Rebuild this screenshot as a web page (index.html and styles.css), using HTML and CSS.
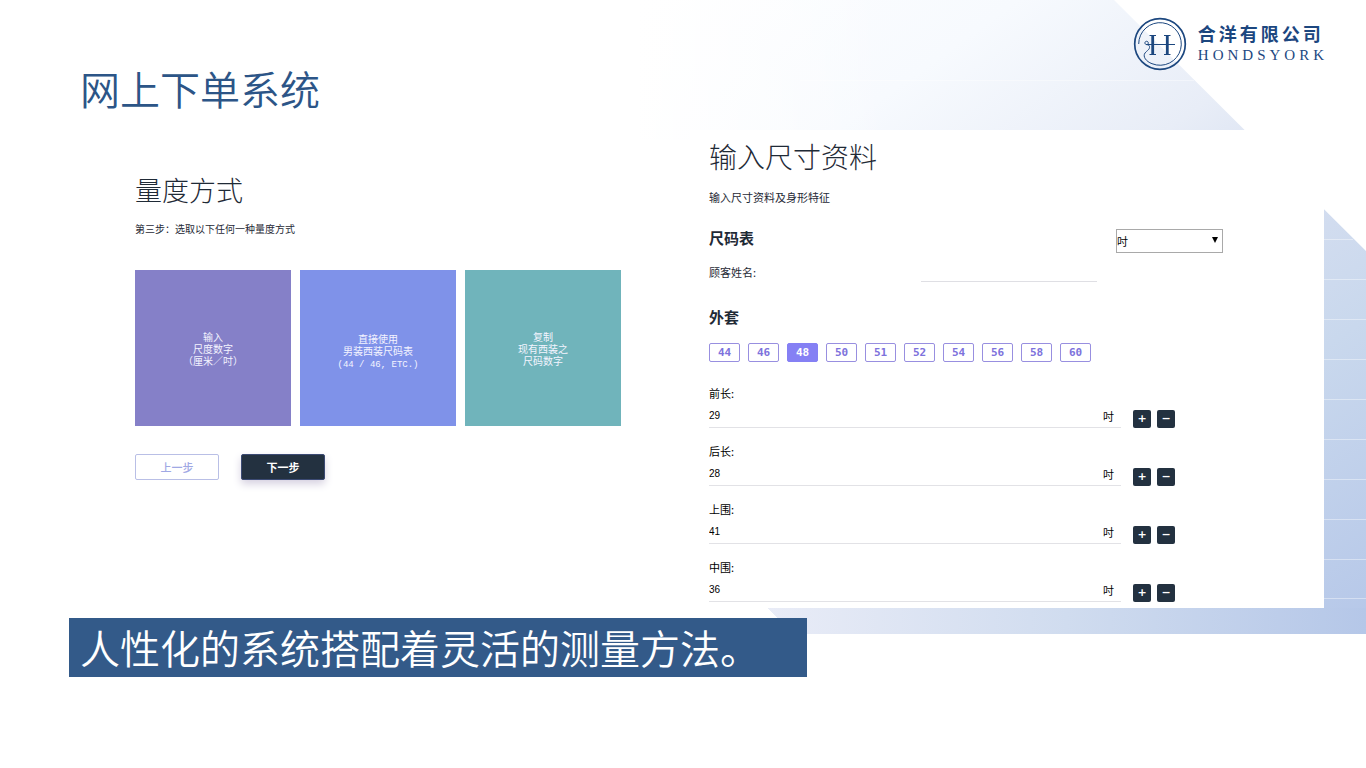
FILE: index.html
```html
<!DOCTYPE html>
<html lang="zh-CN">
<head>
<meta charset="utf-8">
<meta name="viewport" content="width=device-width, initial-scale=1">
<title>网上下单系统</title>
<link rel="stylesheet" href="styles.css">
</head>
<body>
<div class="slide">
  <svg class="backdrop" viewBox="0 0 1366 768" preserveAspectRatio="none" aria-hidden="true">
    <defs>
      <linearGradient id="sky" gradientUnits="userSpaceOnUse" x1="740" y1="-60" x2="1300" y2="720">
        <stop offset="0" stop-color="#fdfeff"/>
        <stop offset="0.22" stop-color="#f7fafe"/>
        <stop offset="0.42" stop-color="#e8edf7"/>
        <stop offset="0.55" stop-color="#d5def0"/>
        <stop offset="0.7" stop-color="#c9d8ed"/>
        <stop offset="1" stop-color="#b3c5e8"/>
      </linearGradient>
      <linearGradient id="floor" x1="0" y1="0" x2="1" y2="0">
        <stop offset="0" stop-color="#e9ecf7"/>
        <stop offset="0.5" stop-color="#d0dcef"/>
        <stop offset="1" stop-color="#b5c7e8"/>
      </linearGradient>
      <linearGradient id="fade" x1="0" y1="0" x2="1" y2="0">
        <stop offset="0" stop-color="#fff"/>
        <stop offset="1" stop-color="#fff" stop-opacity="0"/>
      </linearGradient>
    </defs>
    <path d="M640 0H1114L1366 251V634H794L768 608V140H640Z" fill="url(#sky)"/>
    <path d="M768 608H1366V634H794Z" fill="url(#floor)"/>
    <rect x="630" y="0" width="260" height="600" fill="url(#fade)"/>
    <path d="M800 80.500H1194M1320 239.500H1353M1320 279.500H1366M1320 319.500H1366M1320 359.500H1366M1320 399.500H1366M1320 439.500H1366M1320 479.500H1366M1320 519.500H1366M1320 559.500H1366M1320 598.500H1366" stroke="#fff" stroke-opacity="0.4"/>
  </svg>

  <header class="top">
    <h1 class="title">网上下单系统</h1>
    <div class="brand">
      <svg class="brand-mark" viewBox="0 0 54 54" fill="none" stroke="#1c477f" aria-hidden="true">
        <circle cx="27" cy="27" r="25.3" stroke-width="1.7"/>
        <path d="M5.700 27A21.300 21.300 0 1 1 19 46.700C13 44.500 9.500 39.500 12 36C14 33.500 17 32.500 16.500 29.500C16 27.500 14.500 27.800 13 27.500C11 26.500 12 24 13.800 24.300C15.500 24.600 15.500 26 15 27" stroke-width="1"/>
        <path d="M16.500 18.500H23M31 18.500H37.500M16.500 37.500H23M31 37.500H37.500" stroke-width="1"/>
        <path d="M19.700 18.500V37.500M34.300 18.500V37.500" stroke-width="2.800"/>
        <path d="M13 27.500H42" stroke-width="1"/>
      </svg>
      <div class="brand-text">
        <span class="brand-zh">合洋有限公司</span>
        <span class="brand-en">HONDSYORK</span>
      </div>
    </div>
  </header>

  <main class="content">
    <section class="method">
      <h2 class="method-title">量度方式</h2>
      <p class="method-note">第三步：选取以下任何一种量度方式</p>
      <div class="cards">
        <button class="card card-violet" type="button">输入<br>尺度数字<br>（厘米／吋）</button>
        <button class="card card-blue" type="button">直接使用<br>男装西装尺码表<br><span class="mono">(44 / 46, ETC.)</span></button>
        <button class="card card-teal" type="button">复制<br>现有西装之<br>尺码数字</button>
      </div>
      <div class="steps">
        <button class="step step-prev" type="button">上一步</button>
        <button class="step step-next" type="button">下一步</button>
      </div>
    </section>

    <section class="panel">
      <h2 class="panel-title">输入尺寸资料</h2>
      <p class="panel-note">输入尺寸资料及身形特征</p>
      <div class="chart-row">
        <h3 class="subhead">尺码表</h3>
        <span class="unit-select">
          <select aria-label="单位"><option>吋</option></select>
          <svg class="caret" viewBox="0 0 6 6" aria-hidden="true"><path d="M0 0H6L3 6Z"/></svg>
        </span>
      </div>
      <div class="name-row">
        <label for="customer">顾客姓名:</label>
        <input id="customer" type="text">
      </div>
      <h3 class="subhead">外套</h3>
      <div class="sizes">
        <button class="size" type="button">44</button>
        <button class="size" type="button">46</button>
        <button class="size size-on" type="button">48</button>
        <button class="size" type="button">50</button>
        <button class="size" type="button">51</button>
        <button class="size" type="button">52</button>
        <button class="size" type="button">54</button>
        <button class="size" type="button">56</button>
        <button class="size" type="button">58</button>
        <button class="size" type="button">60</button>
      </div>
      <div class="measures">
        <div class="measure">
          <label for="m1">前长:</label>
          <div class="entry"><div class="field"><input id="m1" type="text" value="29"><span>吋</span></div><button class="nudge" type="button">+</button><button class="nudge" type="button">−</button></div>
        </div>
        <div class="measure">
          <label for="m2">后长:</label>
          <div class="entry"><div class="field"><input id="m2" type="text" value="28"><span>吋</span></div><button class="nudge" type="button">+</button><button class="nudge" type="button">−</button></div>
        </div>
        <div class="measure">
          <label for="m3">上围:</label>
          <div class="entry"><div class="field"><input id="m3" type="text" value="41"><span>吋</span></div><button class="nudge" type="button">+</button><button class="nudge" type="button">−</button></div>
        </div>
        <div class="measure">
          <label for="m4">中围:</label>
          <div class="entry"><div class="field"><input id="m4" type="text" value="36"><span>吋</span></div><button class="nudge" type="button">+</button><button class="nudge" type="button">−</button></div>
        </div>
      </div>
    </section>
  </main>

  <p class="banner">人性化的系统搭配着灵活的测量方法。</p>
</div>
</body>
</html>
```
FILE: styles.css
```css
* {
  box-sizing: border-box;
}

body,
h1,
h2,
h3,
p {
  margin: 0;
}

body {
  background: #fff;
  color: #1f2a36;
  font-family: "Noto Sans CJK SC", sans-serif;
  font-size: 11px;
  line-height: 16px;
}

button,
input,
select {
  margin: 0;
  padding: 0;
  border: 0;
  border-radius: 0;
  background: none;
  color: inherit;
  font: inherit;
}

.slide {
  position: relative;
  min-height: 100vh;
}

.backdrop {
  position: absolute;
  inset: 0;
  z-index: -1;
  width: 100%;
  height: 100%;
}

.top {
  display: flex;
  justify-content: space-between;
  align-items: flex-start;
  min-height: 130px;
  padding: 17px 38px 0 80px;
}

.title {
  padding-top: 41px;
  color: #2c5587;
  font-size: 40px;
  font-weight: 350;
  line-height: 60px;
}

.brand {
  display: flex;
  align-items: center;
  gap: 11px;
  color: #1c477f;
}

.brand-mark {
  width: 54px;
  height: 54px;
}

.brand-text {
  display: flex;
  flex-direction: column;
}

.brand-zh {
  font-size: 18px;
  font-weight: 700;
  letter-spacing: 3px;
  line-height: 22px;
}

.brand-en {
  font-family: "Liberation Serif", serif;
  font-size: 15px;
  letter-spacing: 4px;
  line-height: 22px;
}

.content {
  display: grid;
  grid-template-columns: 690fr 634fr 42fr;
}

.method {
  padding: 43px 69px 0 135px;
}

.method-title,
.panel-title {
  font-weight: 300;
  line-height: 34px;
}

.method-title {
  font-size: 27px;
}

.method-note {
  padding-top: 14px;
  font-size: 10px;
}

.cards {
  display: grid;
  grid-template-columns: repeat(3, 1fr);
  gap: 9px;
  padding-top: 33px;
}

.card {
  aspect-ratio: 1;
  padding-top: 4px;
  color: #f4f4ff;
  font-family: "Liberation Sans", "Noto Sans CJK SC", sans-serif;
  font-size: 10px;
  line-height: 12px;
  text-align: center;
}

.card-violet {
  background: #8580c8;
}

.card-blue {
  padding-top: 8px;
  background: #7f92e9;
}

.card-teal {
  background: #70b4bb;
}

.mono {
  font-family: "Liberation Mono", monospace;
  font-size: 9px;
}

.steps {
  display: flex;
  gap: 22px;
  padding-top: 28px;
}

.step {
  width: 84px;
  height: 26px;
  border: 1px solid #b9bfe6;
  border-radius: 2px;
  color: #a0a8e4;
  font-weight: 500;
}

.step-next {
  border-color: #3b4a73;
  background: #233140;
  box-shadow: 0 4px 8px #d5d0e0;
  color: #fff;
  font-weight: 700;
}

.panel {
  padding: 9px 101px 6px 19px;
  background: #fff;
}

.panel-title {
  font-size: 28px;
}

.panel-note {
  padding-top: 16px;
}

.chart-row {
  display: flex;
  justify-content: space-between;
  padding-top: 24px;
}

.subhead {
  font-size: 15px;
  font-weight: 700;
  line-height: 18px;
}

.unit-select {
  position: relative;
  width: 107px;
  height: 24px;
}

.unit-select select {
  width: 100%;
  height: 100%;
  border: 1px solid #a9a9a9;
  background: #fff;
  color: #000;
  appearance: none;
}

.caret {
  position: absolute;
  top: 8px;
  right: 5px;
  width: 6px;
  height: 6px;
  pointer-events: none;
}

.name-row {
  display: grid;
  grid-template-columns: 212fr 176fr 126fr;
  padding: 11px 0 26px;
}

.name-row input {
  min-width: 0;
  height: 18px;
  border-bottom: 1px solid #dfdfe4;
}

.sizes {
  display: flex;
  gap: 8px;
  padding-top: 17px;
}

.size {
  width: 31px;
  height: 19px;
  border: 1px solid #988fe0;
  border-radius: 2px;
  color: #7d72dc;
  font-family: "DejaVu Sans Mono", monospace;
  font-size: 11px;
  font-weight: 700;
}

.size-on {
  border-color: #8580f4;
  background: #8580f4;
  color: #fff;
}

.measures {
  display: grid;
  gap: 15px;
  padding: 23px 48px 0 0;
  color: #000;
}

.measure label {
  display: block;
}

.entry {
  display: flex;
  align-items: flex-end;
  gap: 6px;
}

.field {
  display: flex;
  flex: 1;
  align-items: flex-end;
  height: 27px;
  margin-right: 6px;
  padding: 0 7px 3px 0;
  border-bottom: 1px solid #e2e2e6;
}

.field input {
  flex: 1;
  min-width: 0;
  font-family: "Liberation Sans", sans-serif;
  font-size: 10px;
}

.nudge {
  width: 18px;
  height: 18px;
  border-radius: 2px;
  background: #233140;
  color: #fff;
  font-family: "DejaVu Sans", sans-serif;
  font-size: 11px;
  font-weight: 700;
  line-height: 18px;
}

.banner {
  width: 54%;
  margin: 10px 0 0 69px;
  padding: 0 11px;
  background: #335a89;
  color: #fff;
  font-size: 40px;
  font-weight: 350;
  line-height: 59px;
}
```
